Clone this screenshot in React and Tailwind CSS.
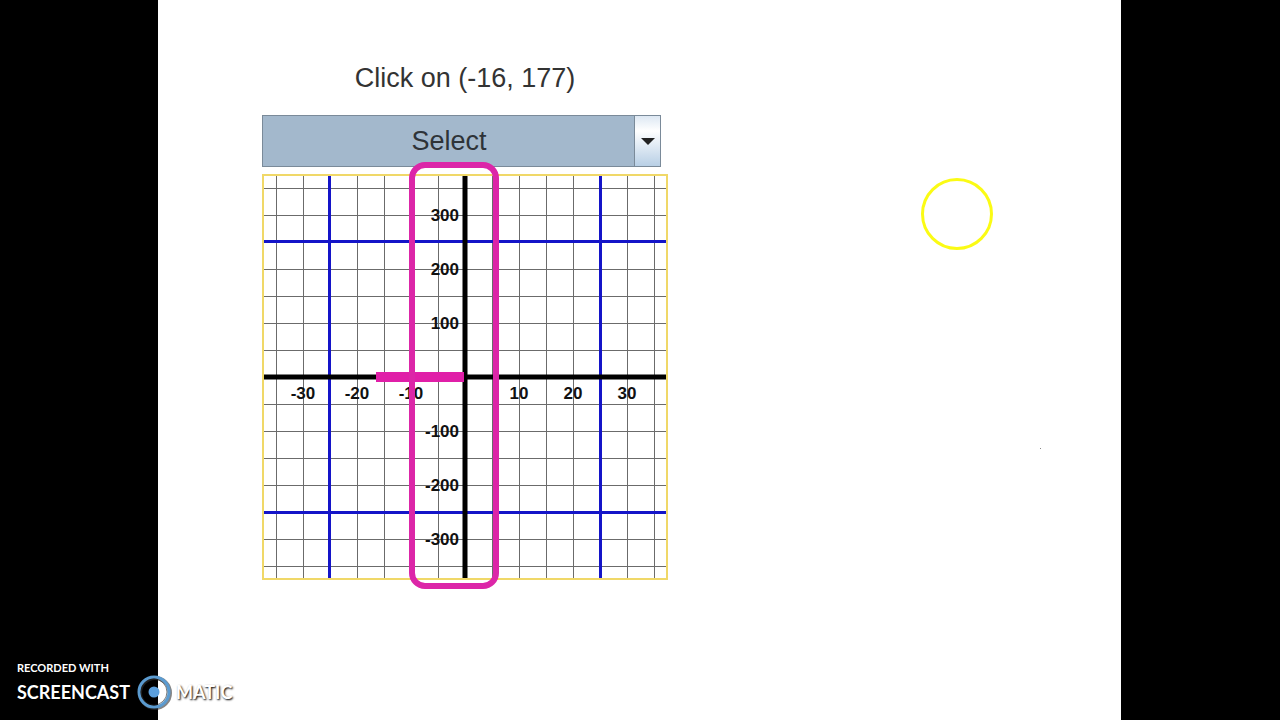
// App.jsx
import { useState } from "react";

const SIZE = 406;
const CENTER = 203;
const STEP = 27;

// one grid line every 5 units on x and every 50 units on y
const LINES = [-7, -6, -5, -4, -3, -2, -1, 1, 2, 3, 4, 5, 6, 7];
const BLUE_LINES = [-5, 5];
const LABELS = [-3, -2, -1, 1, 2, 3];

function GridLines({ steps, stroke, width, spread = 0 }) {
  return (
    <g stroke={stroke} strokeWidth={width}>
      {steps.map((n) => {
        const p = CENTER + n * STEP + 0.5 - (n < 0 ? spread : 0);
        return (
          <g key={n}>
            <line x1={p} y1="2" x2={p} y2={SIZE - 2} />
            <line x1="2" y1={p} x2={SIZE - 2} y2={p} />
          </g>
        );
      })}
    </g>
  );
}

function Graph() {
  const grey = LINES.filter((n) => !BLUE_LINES.includes(n));

  return (
    <svg
      viewBox="0 0 406 406"
      className="block w-full overflow-visible"
      role="img"
      aria-label="Coordinate plane"
    >
      <rect x="1" y="1" width="404" height="404" fill="#fff" />
      <GridLines steps={grey} stroke="#6b6b6b" width="1" />
      <GridLines steps={BLUE_LINES} stroke="#1414c8" width="3" spread={1} />
      <rect
        x="1"
        y="1"
        width="404"
        height="404"
        fill="none"
        stroke="#f0d868"
        strokeWidth="2"
      />

      {/* axes */}
      <line x1="2" y1="203" x2="404" y2="203" stroke="#000" strokeWidth="5" />
      <line x1="203" y1="2" x2="203" y2="404" stroke="#000" strokeWidth="5" />

      <g className="font-['Liberation_Sans',sans-serif] text-[17px] font-bold">
        {LABELS.map((n) => (
          <g key={n} fill="#111">
            <text x={CENTER + n * 54} y="225" textAnchor="middle">
              {n * 10}
            </text>
            <text x="197" y={CENTER - n * 54 + 6} textAnchor="end">
              {n * 100}
            </text>
          </g>
        ))}
      </g>

      {/* pink markings */}
      <rect x="114" y="198" width="88" height="10" fill="#e01fa8" />
      <rect
        x="150"
        y="-9"
        width="84"
        height="421"
        rx="13"
        fill="none"
        stroke="#dc26a8"
        strokeWidth="6"
      />
    </svg>
  );
}

function Combo() {
  const [value, setValue] = useState("");

  return (
    <div className="relative mt-[19px] mr-[7px] h-[52px]">
      <select
        aria-label="Answer"
        value={value}
        onChange={(e) => setValue(e.target.value)}
        className="h-full w-full appearance-none border border-[#7a8a99] bg-[#a3b8cc] pr-[25px] text-center [text-align-last:center] text-[27px] leading-9 text-[#2e3338]"
      >
        <option value="">Select</option>
      </select>
      <div className="pointer-events-none absolute inset-y-0 right-0 flex w-[27px] items-center justify-center border border-[#7a8a99] bg-linear-to-b from-[#dde8f3] via-white via-30% to-[#b8cfe5]">
        <svg width="14" height="7" viewBox="0 0 14 7">
          <path d="M0 0h14L7 7z" fill="#222" />
        </svg>
      </div>
    </div>
  );
}

function Watermark() {
  return (
    <div className="absolute bottom-[10px] left-[17px] font-['Lato',sans-serif] font-bold text-white [text-shadow:1px_1px_2px_#000]">
      <p className="text-[11px] leading-3">RECORDED WITH</p>
      <div className="flex h-9 items-center text-lg leading-none">
        <span>SCREENCAST</span>
        <svg width="36" height="36" viewBox="0 0 36 36" className="mr-1 ml-[6px]">
          <circle cx="19" cy="19" r="15" fill="none" stroke="#333" strokeOpacity="0.6" strokeWidth="4" />
          <circle cx="18" cy="18" r="15" fill="none" stroke="#5b9bd0" strokeWidth="3" />
          <circle cx="18" cy="18" r="13" fill="none" stroke="#222" strokeOpacity="0.6" strokeWidth="1" />
          <circle cx="18" cy="18" r="5.5" fill="#5b9fdc" />
        </svg>
        <span>MATIC</span>
      </div>
    </div>
  );
}

export default function App() {
  return (
    <div className="relative flex min-h-screen bg-black pr-[159px] pl-[158px] font-['Liberation_Sans',sans-serif]">
      <main className="relative flex-1 bg-white pt-[60px] pb-20 pl-[104px]">
        <div className="w-full max-w-[406px]">
          <h1 className="text-center text-[27px] leading-9 text-[#333]">
            Click on (-16, 177)
          </h1>
          <Combo />
          <div className="relative mt-[7px]">
            <Graph />
          </div>
        </div>

        {/* pointer highlight */}
        <div className="absolute top-[178px] left-[763px] size-[72px] rounded-full border-3 border-[#fbfb14]" />
        <div className="absolute top-[448px] left-[882px] size-px bg-[#888]" />
      </main>
      <Watermark />
    </div>
  );
}
